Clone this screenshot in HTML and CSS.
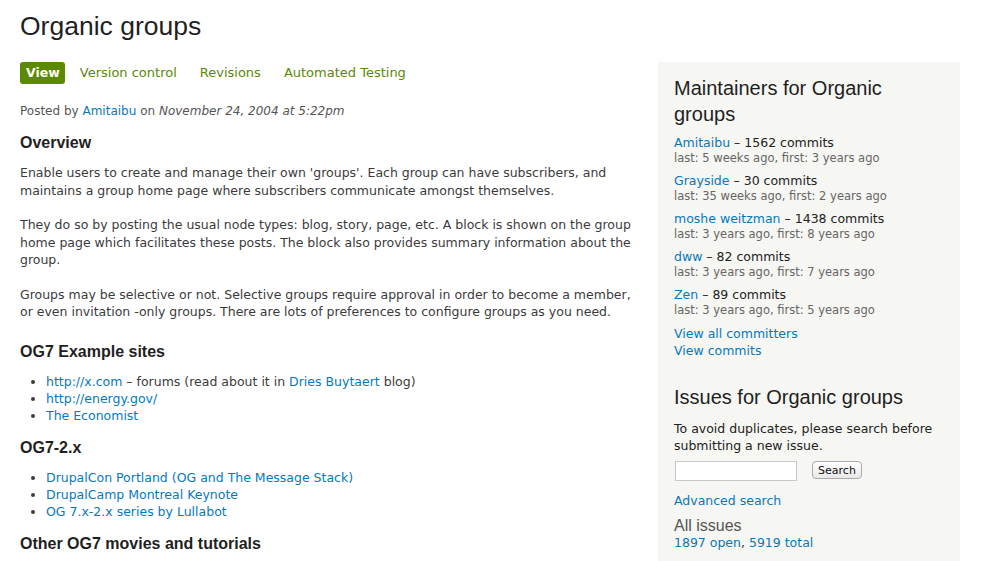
FILE: index.html
```html
<!DOCTYPE html>
<html>
<head>
<meta charset="utf-8">
<link rel="stylesheet" href="styles.css">
</head>
<body>
<div class="page">
  <h1 class="title">Organic groups</h1>
  <div class="layout">
    <main class="main">
      <ul class="tabs">
        <li><a class="tab active">View</a></li>
        <li><a class="tab">Version control</a></li>
        <li><a class="tab">Revisions</a></li>
        <li><a class="tab">Automated Testing</a></li>
      </ul>
      <div class="submitted">Posted by <a class="link">Amitaibu</a> on <em>November 24, 2004 at 5:22pm</em></div>
      <h3 class="h3 first">Overview</h3>
      <p>Enable users to create and manage their own 'groups'. Each group can have subscribers, and maintains a group home page where subscribers communicate amongst themselves.</p>
      <p>They do so by posting the usual node types: blog, story, page, etc. A block is shown on the group home page which facilitates these posts. The block also provides summary information about the group.</p>
      <p>Groups may be selective or not. Selective groups require approval in order to become a member, or even invitation -only groups. There are lots of preferences to configure groups as you need.</p>
      <h3 class="h3">OG7 Example sites</h3>
      <ul class="list">
        <li><a class="link">http://x.com</a> – forums (read about it in <a class="link">Dries Buytaert</a> blog)</li>
        <li><a class="link">http://energy.gov/</a></li>
        <li><a class="link">The Economist</a></li>
      </ul>
      <h3 class="h3">OG7-2.x</h3>
      <ul class="list">
        <li><a class="link">DrupalCon Portland (OG and The Message Stack)</a></li>
        <li><a class="link">DrupalCamp Montreal Keynote</a></li>
        <li><a class="link">OG 7.x-2.x series by Lullabot</a></li>
      </ul>
      <h3 class="h3">Other OG7 movies and tutorials</h3>
    </main>
    <aside class="sidebar">
      <h2 class="side-h">Maintainers for Organic groups</h2>
      <div class="maint">
        <div class="who"><a class="link">Amitaibu</a> – 1562 commits</div>
        <div class="meta">last: 5 weeks ago, first: 3 years ago</div>
      </div>
      <div class="maint">
        <div class="who"><a class="link">Grayside</a> – 30 commits</div>
        <div class="meta">last: 35 weeks ago, first: 2 years ago</div>
      </div>
      <div class="maint">
        <div class="who"><a class="link">moshe weitzman</a> – 1438 commits</div>
        <div class="meta">last: 3 years ago, first: 8 years ago</div>
      </div>
      <div class="maint">
        <div class="who"><a class="link">dww</a> – 82 commits</div>
        <div class="meta">last: 3 years ago, first: 7 years ago</div>
      </div>
      <div class="maint">
        <div class="who"><a class="link">Zen</a> – 89 commits</div>
        <div class="meta">last: 3 years ago, first: 5 years ago</div>
      </div>
      <div class="more">
        <a class="link">View all committers</a><br>
        <a class="link">View commits</a>
      </div>
      <h2 class="side-h issues">Issues for Organic groups</h2>
      <p class="side-p">To avoid duplicates, please search before submitting a new issue.</p>
      <form class="search">
        <input class="search-input" type="text">
        <button class="search-btn" type="button">Search</button>
      </form>
      <div class="adv"><a class="link">Advanced search</a></div>
      <div class="all">All issues</div>
      <div class="counts"><a class="link">1897 open</a>, <a class="link">5919 total</a></div>
    </aside>
  </div>
</div>
</body>
</html>
```
FILE: styles.css
```css
html, body {
  margin: 0;
  padding: 0;
  background: #fff;
}
body {
  font-family: "DejaVu Sans", Verdana, sans-serif;
  font-size: 12.5px;
  line-height: 17.3px;
  color: #3b3b3b;
}
.page {
  padding: 0 21px 0 20px;
}
.title {
  font-family: "Liberation Sans", Arial, sans-serif;
  font-weight: normal;
  font-size: 26.5px;
  line-height: 30px;
  color: #1f1f1f;
  margin: 11px 0 0;
}
.layout {
  display: flex;
  align-items: flex-start;
  margin-top: 21px;
}
.main {
  width: 620px;
  flex: none;
}
.sidebar {
  margin-left: 18px;
  width: 302px;
  flex: none;
  background: #f6f6f2;
  padding: 13px 14px 10px 16px;
  box-sizing: border-box;
  min-height: 520px;
}
.link {
  color: #0678be;
  text-decoration: none;
}
.tabs {
  list-style: none;
  margin: 0;
  padding: 0;
  display: flex;
}
.tab {
  display: block;
  font-size: 13px;
  line-height: 22px;
  padding: 0 8px;
  margin-right: 7px;
  color: #5a8a00;
  border-radius: 3px;
}
.tab.active {
  background: #5b8a00;
  color: #fff;
  font-weight: bold;
  font-size: 12.5px;
  padding: 0 5px 0 6px;
  margin-right: 7px;
}
.submitted {
  margin-top: 19px;
  font-size: 12px;
  color: #555;
}
.submitted em { font-style: italic; }
.h3 {
  font-family: "Liberation Sans", Arial, sans-serif;
  font-size: 16px;
  font-weight: bold;
  line-height: 20px;
  color: #1f1f1f;
  margin: 22px 0 11px;
}
.h3.first {
  margin-top: 13px;
  margin-bottom: 11px;
}
p {
  margin: 0 0 17.5px;
}
.list {
  margin: 0;
  padding-left: 26px;
}
.list + .h3 {
  margin-top: 14px;
  margin-bottom: 11px;
}
.list li {
  line-height: 17px;
}
.side-h {
  font-family: "Liberation Sans", Arial, sans-serif;
  font-weight: normal;
  font-size: 20px;
  line-height: 26px;
  color: #1f1f1f;
  margin: 0 0 8px;
}
.maint {
  margin-bottom: 7px;
  color: #222;
}
.who { line-height: 16px; }
.meta {
  color: #666;
  font-size: 11.5px;
  line-height: 15px;
}
.more {
  margin-top: 6px;
  line-height: 17px;
}
.issues {
  margin-top: 25px;
  margin-bottom: 10px;
}
.side-p {
  color: #222;
  margin: 0 0 7px;
  line-height: 17px;
}
.search {
  display: flex;
  align-items: flex-start;
  margin: 0 0 11px 1px;
}
.search-input {
  width: 122px;
  height: 20px;
  box-sizing: border-box;
  border: 1px solid #c8c8c8;
  background: #fff;
  margin: 0;
  padding: 2px;
}
.search-btn {
  margin-left: 15px;
  height: 18px;
  width: 50px;
  padding: 0;
  font-family: "DejaVu Sans", sans-serif;
  font-size: 11px;
  color: #111;
  border: 1px solid #aaa;
  border-radius: 4px;
  background: linear-gradient(#fff, #e8e8e8);
}
.adv { margin-bottom: 8px; }
.all {
  font-family: "Liberation Sans", Arial, sans-serif;
  font-size: 16px;
  color: #555;
  line-height: 17px;
}
.counts { line-height: 17px; }
```
